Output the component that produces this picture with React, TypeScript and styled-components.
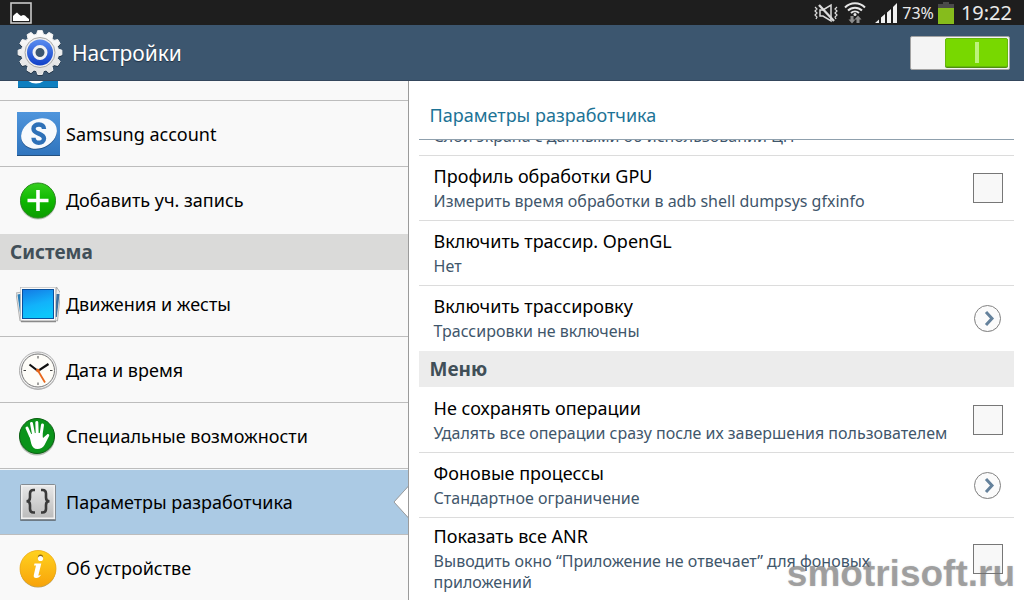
import React from "react";
import styled, { createGlobalStyle } from "styled-components";

const GlobalStyle = createGlobalStyle`
  *, *::before, *::after { box-sizing: border-box; }
  body {
    margin: 0;
    background: #fff;
    color: #000;
    font-family: "Noto Sans", "Liberation Sans", sans-serif;
  }
  h1, h2, ul { margin: 0; padding: 0; }
  ul { list-style: none; }
`;

const Screen = styled.div`
  position: relative;
  display: flex;
  flex-direction: column;
  height: 100vh;
  overflow: hidden;
`;

const StatusBar = styled.div`
  display: flex;
  flex: none;
  align-items: center;
  justify-content: space-between;
  height: 25px;
  padding: 0 12px 0 10px;
  background: #1e1e1e;
  color: #eaeaea;
`;

const StatusIcons = styled.div`
  display: flex;
  align-items: center;
  gap: 4px;
`;

const RadioIcons = styled.div`
  display: flex;
  align-items: center;
  gap: 6px;
  padding-right: 5px;
`;

const BatteryLevel = styled.span`
  font-size: 16px;
  line-height: 24px;
`;

const Clock = styled.time`
  padding-left: 3px;
  font-size: 20px;
  line-height: 24px;
`;

const TitleBar = styled.header`
  display: flex;
  flex: none;
  align-items: center;
  justify-content: space-between;
  height: 56px;
  padding: 0 14px 0 16px;
  background: #3c566f;
  border-bottom: 1px solid #34465c;
`;

const Brand = styled.h1`
  display: flex;
  align-items: center;
  gap: 8px;
  color: #fff;
  font-size: 21px;
  font-weight: 400;
  line-height: 28px;
  text-shadow: 0 1px 1px #1f2f40;
`;

const Switch = styled.input`
  appearance: none;
  display: flex;
  justify-content: flex-end;
  width: 100px;
  height: 34px;
  margin: 0;
  padding: 1px;
  border: 1px solid #a3a3a3;
  border-radius: 2px;
  background: #f4f4f4;

  &::before {
    content: "";
    width: 63px;
    height: 29px;
    border-radius: 2px;
    border: 1px solid #66b80a;
    background: linear-gradient(#bdf37c, #bdf37c) center / 4px 21px no-repeat, #78d800;
    box-shadow: 0 1px 0 #4f8f10;
  }
`;

const Columns = styled.div`
  display: grid;
  flex: 1;
  grid-template-columns: calc(40% - 1px) minmax(0, 1fr);
  min-height: 0;
`;

const Sidebar = styled.nav`
  overflow: hidden;
  background: #f9f9f9;
  border-right: 1px solid #9b9b9b;
`;

const NavItem = styled.li<{ $cut?: boolean; $plain?: boolean; $selected?: boolean }>`
  position: relative;
  display: flex;
  align-items: ${(p) => (p.$cut ? "flex-end" : "stretch")};
  height: ${(p) => (p.$cut ? 20 : 66)}px;
  overflow: ${(p) => (p.$cut ? "hidden" : "visible")};
  border-bottom: 1px solid ${(p) => (p.$plain ? "transparent" : "#bdbdbd")};
  background: ${(p) => (p.$selected ? "#abcae4" : "transparent")};
  box-shadow: ${(p) => (p.$selected ? "inset 0 1px 0 #f4f8fb" : "none")};
`;

const NavLink = styled.a`
  display: flex;
  flex: 1;
  align-items: center;
  gap: 6px;
  padding: 0 16px;
  color: #000;
  font-size: 18px;
  line-height: 26px;
  text-decoration: none;
`;

const CutLink = styled(NavLink)`
  padding-bottom: 11px;
`;

const Notch = styled.svg`
  position: absolute;
  top: 16px;
  right: -1px;
`;

const NavHeading = styled.h2`
  height: 38px;
  padding: 0 10px;
  border: solid #f9f9f9;
  border-width: 1px 0;
  background: #dadad9;
  color: #414f58;
  font-size: 19px;
  font-weight: 700;
  line-height: 36px;
`;

const Details = styled.main`
  overflow: hidden;
  padding: 0 10px;
`;

const DetailsTitle = styled.h2`
  height: 59px;
  padding: 21px 11px 0;
  border-bottom: 1px solid #8fa0ad;
  color: #1d7396;
  font-size: 18px;
  font-weight: 400;
  line-height: 27px;
`;

const CutRow = styled.div`
  display: flex;
  align-items: flex-end;
  height: 16px;
  padding: 0 15px 8px;
  overflow: hidden;
  border-bottom: 1px solid #dcdcdc;
`;

const GroupHeading = styled.h2`
  height: 36px;
  margin-bottom: 1px;
  padding: 0 11px;
  background: #ececec;
  color: #414f58;
  font-size: 19px;
  font-weight: 700;
  line-height: 36px;
`;

const Row = styled.div<{ $plain?: boolean }>`
  display: flex;
  align-items: center;
  justify-content: space-between;
  gap: 16px;
  width: 100%;
  min-height: 65px;
  padding: 5px 11px 5px 15px;
  border: 0;
  border-bottom: 1px solid ${(p) => (p.$plain ? "transparent" : "#dcdcdc")};
  background: none;
  color: inherit;
  font-family: inherit;
  text-align: left;
`;

const RowText = styled.span`
  display: flex;
  flex: 1;
  flex-direction: column;
  gap: 2px;
  padding-bottom: 2px;
`;

const RowTitle = styled.span`
  font-size: 18px;
  line-height: 26px;
`;

const RowNote = styled.span`
  color: #3f566b;
  font-size: 16px;
  line-height: 21px;
`;

const Check = styled.input`
  appearance: none;
  flex: none;
  width: 30px;
  height: 30px;
  margin: 0;
  border: 1px solid #777;
  background: #f8f8f8;
`;

const Watermark = styled.div`
  position: absolute;
  right: 9px;
  bottom: 6px;
  color: rgba(112, 112, 112, 0.6);
  font-family: "Liberation Sans", sans-serif;
  font-size: 37px;
  font-weight: 700;
  line-height: 40px;
  text-shadow: 0 0 2px rgba(112, 112, 112, 0.2);
  pointer-events: none;
`;

const gearPoints = (() => {
  const points: string[] = [];
  const teeth = 12;
  for (let i = 0; i < teeth; i++) {
    [
      [-0.36, 18.5],
      [-0.2, 22],
      [0.2, 22],
      [0.36, 18.5],
    ].forEach(([shift, r]) => {
      const angle = ((i + shift) / teeth) * Math.PI * 2 - Math.PI / 2;
      points.push(`${(24 + r * Math.cos(angle)).toFixed(2)},${(24 + r * Math.sin(angle)).toFixed(2)}`);
    });
  }
  return points.join(" ");
})();

const GearIcon = () => (
  <svg width="48" height="48" viewBox="0 0 48 48" aria-hidden="true">
    <defs>
      <linearGradient id="gearBlue" x1="0" y1="0" x2="0" y2="1">
        <stop offset="0" stopColor="#5b8df0" />
        <stop offset="1" stopColor="#0f3fc8" />
      </linearGradient>
      <linearGradient id="gearWhite" x1="0" y1="0" x2="0" y2="1">
        <stop offset="0" stopColor="#fff" />
        <stop offset="1" stopColor="#dedede" />
      </linearGradient>
    </defs>
    <polygon points={gearPoints} transform="translate(0 0.5)" fill="#26384a" stroke="#26384a" strokeLinejoin="round" />
    <g transform="translate(0 -0.5)">
      <polygon points={gearPoints} fill="url(#gearWhite)" stroke="#f4f4f4" strokeLinejoin="round" />
      <circle cx="24" cy="24" r="15" fill="#eee" stroke="#a8a8a8" />
      <circle cx="24" cy="24" r="13" fill="url(#gearBlue)" />
      <circle cx="24" cy="24" r="6" fill="#3c566f" stroke="#f2f2f2" strokeWidth="3" />
    </g>
  </svg>
);

const PictureIcon = () => (
  <svg width="22" height="22" viewBox="0 0 22 22" aria-hidden="true">
    <rect x="1" y="1" width="20" height="20" fill="#1e1e1e" stroke="#c9c9c9" strokeWidth="1.6" />
    <path d="M3 19v-5l2-2 2-1.500 2 2 2 1.500 2-1 2 .5 2 2 2 1.500v2z" fill="#fff" />
  </svg>
);

const MutedIcon = () => (
  <svg width="24" height="20" viewBox="0 0 24 20" fill="none" stroke="#dcdcdc" strokeWidth="1.500" aria-hidden="true">
    <path d="M1 4l2 2-2 2 2 2-2 2 2 2-1 2M23 4l-2 2 2 2-2 2 2 2-2 2 1 2" strokeWidth="1.200" />
    <path d="M6 7h3l8-5v16l-8-5H6z" />
    <path d="M5 2l15 16" strokeWidth="2.400" />
  </svg>
);

const WifiIcon = () => (
  <svg width="22" height="24" viewBox="0 0 22 24" aria-hidden="true">
    <g fill="none" stroke="#e6e6e6" strokeWidth="2">
      <path d="M1 6.500a14 14 0 0 1 20 0" />
      <path d="M4 9.500a10 10 0 0 1 14 0" />
      <path d="M7 12a6 6 0 0 1 8 0" />
    </g>
    <circle cx="11" cy="13.500" r="1.500" fill="#e6e6e6" />
    <path d="M8 22.500l-3.500-4h2V15h3v3.500h2z" fill="#8d8d8d" />
    <path d="M14 14.500l3.500 4h-2V22h-3v-3.500h-2z" fill="#8d8d8d" />
  </svg>
);

const SignalIcon = () => (
  <svg width="23" height="22" viewBox="0 0 23 22" fill="#f2f2f2" aria-hidden="true">
    <path d="M0 21l4-3.500V21zM6 21v-5.500L10 12v9zM12 21V10.500L16 7v14zM18 21V5l4-4v20z" />
  </svg>
);

const BatteryIcon = () => (
  <svg width="16" height="22" viewBox="0 0 16 22" aria-hidden="true">
    <path d="M5 0h6v2h5v5H0V2h5z" fill="#4a4a4a" />
    <path d="M0 6h16v16H0z" fill="#86bc1c" />
  </svg>
);

const CutAppIcon = () => (
  <svg width="44" height="44" viewBox="0 0 44 44" aria-hidden="true">
    <rect x="2" y="2" width="40" height="41" fill="#0e7fc0" />
    <path d="M2 42.500h40" stroke="#0b6295" />
    <circle cx="20" cy="26" r="11" fill="none" stroke="#fff" strokeWidth="3" />
  </svg>
);

const SamsungIcon = () => (
  <svg width="44" height="44" viewBox="0 0 44 44" aria-hidden="true">
    <defs>
      <linearGradient id="samsungBlue" x1="0" y1="0" x2="0" y2="1">
        <stop offset="0" stopColor="#4f95dc" />
        <stop offset="1" stopColor="#2f74bd" />
      </linearGradient>
    </defs>
    <rect x="1" y="0" width="43" height="44" fill="url(#samsungBlue)" />
    <path d="M1 43.500h43" stroke="#24507f" />
    <ellipse cx="23" cy="22.500" rx="18.500" ry="14.500" transform="rotate(-24 23 22.500)" fill="#23558c" />
    <ellipse cx="23" cy="21.500" rx="18.500" ry="14.500" transform="rotate(-24 23 21.500)" fill="#f7fafd" />
    <path d="M28 17c0-3-2-4.500-5-4.500s-5.500 1.500-5.500 4.200c0 5.600 10.500 4.300 10.500 9.800 0 2.800-2.500 4.200-5.200 4.200s-5.300-1.500-5.300-5" fill="none" stroke="#2e71b8" strokeWidth="4.400" />
  </svg>
);

const AddIcon = () => (
  <svg width="44" height="44" viewBox="0 0 44 44" aria-hidden="true">
    <defs>
      <linearGradient id="addGreen" x1="0" y1="0" x2="0" y2="1">
        <stop offset="0" stopColor="#35cf1e" />
        <stop offset="0.5" stopColor="#0eb800" />
        <stop offset="1" stopColor="#0a9c00" />
      </linearGradient>
    </defs>
    <circle cx="22" cy="23.500" r="18" fill="#b9c4b7" />
    <circle cx="22" cy="22.500" r="17.500" fill="url(#addGreen)" stroke="#2c8a22" />
    <path d="M22 12v21M11.500 22.500h21" stroke="#fff" strokeWidth="3.600" />
  </svg>
);

const MotionIcon = () => (
  <svg width="44" height="44" viewBox="0 0 44 44" aria-hidden="true">
    <defs>
      <linearGradient id="motionBlue" x1="0" y1="0" x2="0.300" y2="1">
        <stop offset="0" stopColor="#1479e4" />
        <stop offset="0.600" stopColor="#12b2fa" />
        <stop offset="1" stopColor="#0cc6fb" />
      </linearGradient>
    </defs>
    <path d="M0 11l6-1 2 28-4 1z" fill="#ececec" stroke="#a2a2a2" strokeWidth="0.800" />
    <path d="M1.500 12.500l4-.8 1 22-2 .5z" fill="#2a7fb8" />
    <path d="M44.500 11l-4-6-3 33 4 1z" fill="#ececec" stroke="#a2a2a2" strokeWidth="0.800" />
    <path d="M43.500 12l-3 0-1.500 23 1.800 0z" fill="#3a6f9f" />
    <path d="M5 39.500h35" stroke="#8a8a8a" strokeWidth="1.500" />
    <rect x="4.500" y="5.500" width="35" height="33" fill="#fafafa" stroke="#b5b5b5" strokeWidth="0.600" />
    <rect x="6.500" y="7.500" width="31" height="29" fill="url(#motionBlue)" stroke="#0a4f9c" />
  </svg>
);

const ClockIcon = () => (
  <svg width="44" height="44" viewBox="0 0 44 44" fill="none" aria-hidden="true">
    <circle cx="22" cy="23.500" r="18.500" fill="#b5b5b5" />
    <circle cx="22" cy="22.500" r="18.500" fill="#f1f1f1" stroke="#b0b0b0" />
    <circle cx="22" cy="22.500" r="16.500" fill="#fefdf8" stroke="#777" />
    <path d="M22 8v2.500M22 34.500V37M7.500 22.500H10M34 22.500h2.500" stroke="#444" />
    <path d="M13.500 16.500l8.500 6.500 10.500-7" stroke="#111" strokeWidth="2.200" />
    <path d="M21 21l8 13.500" stroke="#e8671b" strokeWidth="1.800" />
    <circle cx="22" cy="22.500" r="1.800" fill="#e8671b" />
  </svg>
);

const HandIcon = () => (
  <svg width="44" height="44" viewBox="0 0 44 44" aria-hidden="true">
    <circle cx="21" cy="23.500" r="18" fill="#b5beb4" />
    <circle cx="21" cy="22" r="17.500" fill="#0a931a" stroke="#0b5f12" />
    <g fill="none" stroke="#fff" strokeWidth="3" strokeLinecap="round">
      <path d="M14.500 22l-3.500-8M17.500 20l-2-10.500M21.200 20l-.4-11.500M25 21l1.500-10" />
    </g>
    <path d="M13.200 21c4-2 9-2.500 13-1.500l.8 4.500 4-3.500c1.100-1 2.900.1 2.100 1.500L28.500 31c-1.500 2.500-4 4-7 4-3.500 0-5.500-2-6.300-5.500z" fill="#fff" />
  </svg>
);

const BracesIcon = () => (
  <svg width="44" height="44" viewBox="0 0 44 44" fill="none" aria-hidden="true">
    <defs>
      <linearGradient id="bracesGrey" x1="0" y1="0" x2="0" y2="1">
        <stop offset="0" stopColor="#e6e6e6" />
        <stop offset="1" stopColor="#bcbcbc" />
      </linearGradient>
    </defs>
    <rect x="4" y="5" width="36" height="36" rx="1" fill="#6d7a85" />
    <rect x="4.500" y="4.500" width="35" height="35" rx="1" fill="#f1f1f1" stroke="#858c92" />
    <rect x="6.500" y="6.500" width="31" height="31" fill="url(#bracesGrey)" />
    <g stroke="#3a3a3a" strokeWidth="2.600">
      <path d="M19 10h-1.500c-2.500 0-3.500 1-3.500 3.500v4c0 2.500-1 3.800-3.500 3.800 2.500 0 3.500 1.200 3.500 3.700v4c0 2.500 1 3.500 3.500 3.500H19" />
      <path d="M25 10h1.500c2.500 0 3.500 1 3.500 3.500v4c0 2.500 1 3.800 3.500 3.800-2.500 0-3.500 1.200-3.500 3.700v4c0 2.500-1 3.500-3.500 3.500H25" />
    </g>
  </svg>
);

const InfoIcon = () => (
  <svg width="44" height="44" viewBox="0 0 44 44" aria-hidden="true">
    <defs>
      <linearGradient id="infoAmber" x1="0" y1="0" x2="0" y2="1">
        <stop offset="0" stopColor="#ffd21f" />
        <stop offset="1" stopColor="#f8a30a" />
      </linearGradient>
    </defs>
    <circle cx="22" cy="23.500" r="18" fill="#b39a64" />
    <circle cx="22" cy="22.500" r="18" fill="url(#infoAmber)" stroke="#eda915" strokeWidth="0.800" />
    <g fill="#8f6a10" transform="translate(0 -1)">
      <circle cx="24.500" cy="12" r="2.600" />
      <path d="M18.500 17.500h6.800z" />
    </g>
    <circle cx="24.500" cy="12.500" r="2.600" fill="#fff" />
    <path d="M18.500 17.500h6.800l-2.800 11.300c-.3 1.200.7 1.200 2.700-.3-1.200 2.500-3 3.500-5 3.500-1.900 0-2.900-1-2.400-3l2.200-9.500h-2z" fill="#fff" />
  </svg>
);

const ChevronIcon = () => (
  <svg width="30" height="30" viewBox="0 0 30 30" aria-hidden="true">
    <circle cx="14.500" cy="16" r="13" fill="#cfcfcf" />
    <circle cx="14.500" cy="15.500" r="13" fill="#fbfbfb" stroke="#838383" />
    <path d="M13 9l6 6.500-6 6.500" fill="none" stroke="#64819b" strokeWidth="3" />
  </svg>
);

type NavEntry = { label: string; icon: React.ReactNode; plain?: boolean; selected?: boolean };

const accounts: NavEntry[] = [
  { label: "Samsung account", icon: <SamsungIcon /> },
  { label: "Добавить уч. запись", icon: <AddIcon />, plain: true },
];

const system: NavEntry[] = [
  { label: "Движения и жесты", icon: <MotionIcon /> },
  { label: "Дата и время", icon: <ClockIcon /> },
  { label: "Специальные возможности", icon: <HandIcon /> },
  { label: "Параметры разработчика", icon: <BracesIcon />, selected: true },
  { label: "Об устройстве", icon: <InfoIcon /> },
];

const NavEntries = ({ entries }: { entries: NavEntry[] }) => (
  <>
    {entries.map((entry) => (
      <NavItem key={entry.label} $plain={entry.plain} $selected={entry.selected}>
        <NavLink href="#" aria-current={entry.selected ? "page" : undefined}>
          {entry.icon}
          {entry.label}
        </NavLink>
        {entry.selected && (
          <Notch width="16" height="34" viewBox="0 0 16 34" aria-hidden="true">
            <path d="M16 1L1 17l15 16z" fill="#fff" />
            <path d="M15.500 1L1 17l14.500 16" fill="none" stroke="#9b9b9b" />
          </Notch>
        )}
      </NavItem>
    ))}
  </>
);

type RowProps = { title: string; note: string; plain?: boolean };

const Texts = ({ title, note }: RowProps) => (
  <RowText>
    <RowTitle>{title}</RowTitle>
    <RowNote>{note}</RowNote>
  </RowText>
);

const CheckRow = (props: RowProps) => (
  <Row as="label" $plain={props.plain}>
    <Texts {...props} />
    <Check type="checkbox" />
  </Row>
);

const LinkRow = (props: RowProps) => (
  <Row as="button" type="button" $plain={props.plain}>
    <Texts {...props} />
    <ChevronIcon />
  </Row>
);

const TextRow = (props: RowProps) => (
  <Row as="button" type="button" $plain={props.plain}>
    <Texts {...props} />
  </Row>
);

export default function App() {
  return (
    <Screen>
      <GlobalStyle />
      <StatusBar>
        <PictureIcon />
        <StatusIcons>
          <RadioIcons>
            <MutedIcon />
            <WifiIcon />
          </RadioIcons>
          <SignalIcon />
          <BatteryLevel>73%</BatteryLevel>
          <BatteryIcon />
          <Clock>19:22</Clock>
        </StatusIcons>
      </StatusBar>
      <TitleBar>
        <Brand>
          <GearIcon />
          Настройки
        </Brand>
        <Switch type="checkbox" role="switch" aria-label="Параметры разработчика" defaultChecked />
      </TitleBar>
      <Columns>
        <Sidebar>
          <ul>
            <NavItem $cut>
              <CutLink href="#" aria-label="Учетная запись">
                <CutAppIcon />
              </CutLink>
            </NavItem>
            <NavEntries entries={accounts} />
          </ul>
          <NavHeading>Система</NavHeading>
          <ul>
            <NavEntries entries={system} />
          </ul>
        </Sidebar>
        <Details>
          <DetailsTitle>Параметры разработчика</DetailsTitle>
          <CutRow>
            <RowNote>Слои экрана с данными об использовании ЦП</RowNote>
          </CutRow>
          <CheckRow title="Профиль обработки GPU" note="Измерить время обработки в adb shell dumpsys gfxinfo" />
          <TextRow title="Включить трассир. OpenGL" note="Нет" />
          <LinkRow title="Включить трассировку" note="Трассировки не включены" plain />
          <GroupHeading>Меню</GroupHeading>
          <CheckRow title="Не сохранять операции" note="Удалять все операции сразу после их завершения пользователем" />
          <LinkRow title="Фоновые процессы" note="Стандартное ограничение" />
          <CheckRow title="Показать все ANR" note="Выводить окно “Приложение не отвечает” для фоновых приложений" />
        </Details>
      </Columns>
      <Watermark>smotrisoft.ru</Watermark>
    </Screen>
  );
}
